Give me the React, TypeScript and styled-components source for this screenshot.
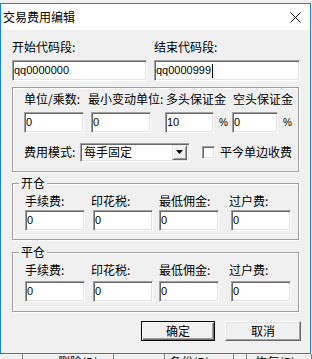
import React from 'react';
import styled, { createGlobalStyle } from 'styled-components';

const Global = createGlobalStyle`
  html, body { margin: 0; padding: 0; background: #f0f0f0; }
  body {
    font-family: "Noto Sans CJK SC", "Microsoft YaHei", sans-serif;
    font-size: 12px;
    color: #000;
  }
  * { box-sizing: border-box; }
`;

const Screen = styled.div`
  width: 312px;
  height: 359px;
  overflow: hidden;
  background: #f0f0f0;
  padding-top: 3px;
  display: flex;
  flex-direction: column;
`;

const Dialog = styled.div`
  width: 311px;
  height: 351px;
  flex: none;
  border: 1px solid #1a84d8;
  background: #f0f0f0;
  display: flex;
  flex-direction: column;
`;

const TitleBar = styled.div`
  height: 26px;
  background: #fff;
  display: flex;
  align-items: center;
  padding: 0 9px 0 2px;
  font-size: 12px;
  line-height: 14px;
`;

const TitleText = styled.span`
  flex: 1;
`;

const Content = styled.div`
  padding: 10px 9px 0 11px;
  display: flex;
  flex-direction: column;
`;

const CodeRow = styled.div`
  display: grid;
  grid-template-columns: 135px 146px;
  column-gap: 7px;
`;

const Field = styled.div<{ $gap?: number }>`
  display: flex;
  flex-direction: column;
  gap: ${p => p.$gap ?? 6}px;
`;

const Label = styled.div<{ $shift?: number }>`
  height: 14px;
  line-height: 14px;
  white-space: nowrap;
  margin-left: ${p => p.$shift ?? 0}px;
`;

const TextBox = styled.div<{ $w?: number }>`
  width: ${p => (p.$w ? `${p.$w}px` : '100%')};
  height: 21px;
  background: #fff;
  border: 1px solid;
  border-color: #a0a0a0 #fff #fff #a0a0a0;
  box-shadow: inset 1px 1px 0 #696969, inset -1px -1px 0 #e3e3e3;
  padding: 0 0 0 1px;
  display: flex;
  align-items: center;
  font-family: "Liberation Sans", Arial, sans-serif;
  font-size: 11px;
  line-height: 13px;
`;

const Caret = styled.span`
  display: inline-block;
  width: 1px;
  height: 14px;
  background: #000;
  margin-left: 1px;
`;

const Panel = styled.div`
  margin-top: 6px;
  width: 287px;
  border: 1px solid #a0a0a0;
  box-shadow: inset 1px 1px 0 #fff, 1px 1px 0 #fff;
  padding: 4px 0 9px 11px;
  display: flex;
  flex-direction: column;
`;

const ParamGrid = styled.div`
  display: grid;
  grid-template-columns: 67px 74px 67px 60px;
`;

const Suffix = styled.div`
  display: flex;
  align-items: center;
  gap: 5px;
  font-family: "Liberation Sans", Arial, sans-serif;
  font-size: 10px;
`;

const ModeRow = styled.div`
  margin-top: 9px;
  height: 20px;
  display: flex;
  align-items: center;
`;

const ModeLabel = styled.div`
  width: 56px;
  line-height: 14px;
`;

const Combo = styled.div`
  width: 110px;
  height: 19px;
  background: #fff;
  border: 1px solid;
  border-color: #a0a0a0 #fff #fff #a0a0a0;
  box-shadow: inset 1px 1px 0 #696969, inset -1px -1px 0 #e3e3e3;
  display: flex;
  align-items: center;
  padding: 1px 2px 1px 3px;
`;

const ComboText = styled.span`
  flex: 1;
  line-height: 14px;
`;

const ComboButton = styled.div`
  width: 15px;
  height: 15px;
  background: #f0f0f0;
  border: 1px solid;
  border-color: #e3e3e3 #696969 #696969 #e3e3e3;
  box-shadow: inset 1px 1px 0 #fff, inset -1px -1px 0 #a0a0a0;
  display: flex;
  align-items: center;
  justify-content: center;
`;

const CheckBox = styled.div`
  width: 13px;
  height: 13px;
  margin-left: 12px;
  background: #fff;
  border: 1px solid;
  border-color: #a0a0a0 #fff #fff #a0a0a0;
  box-shadow: inset 1px 1px 0 #696969, inset -1px -1px 0 #e3e3e3;
`;

const CheckLabel = styled.span`
  margin-left: 5px;
  line-height: 14px;
`;

const Group = styled.fieldset<{ $mt: number; $pb: number }>`
  margin: ${p => p.$mt}px 0 0 0;
  width: 287px;
  border: 1px solid #a0a0a0;
  box-shadow: inset 1px 1px 0 #fff, 1px 1px 0 #fff;
  padding: 0 0 ${p => p.$pb}px 12px;
  min-inline-size: 0;
`;

const Legend = styled.legend`
  padding: 0 2px;
  margin-left: -6px;
  line-height: 14px;
  font-size: 12px;
`;

const FeeGrid = styled.div`
  margin-top: 4px;
  display: grid;
  grid-template-columns: 68px 66px 72px 60px;
`;

const ButtonRow = styled.div`
  margin-top: 9px;
  display: flex;
  justify-content: flex-end;
  gap: 10px;
`;

const Button = styled.div<{ $w: number; $default?: boolean }>`
  width: ${p => p.$w}px;
  height: 20px;
  background: #f0f0f0;
  border: 1px solid;
  border-color: ${p => (p.$default ? '#000' : '#fff #696969 #696969 #fff')};
  box-shadow: ${p =>
    p.$default
      ? 'inset 1px 1px 0 #fff, inset -1px -1px 0 #696969, inset -2px -2px 0 #a0a0a0'
      : 'inset -1px -1px 0 #a0a0a0, inset 1px 1px 0 #e3e3e3'};
  display: flex;
  align-items: center;
  justify-content: center;
  line-height: 14px;
`;

const BackStrip = styled.div`
  height: 5px;
  flex: none;
  display: flex;
  overflow: hidden;
  align-items: flex-start;
`;

const BackButton = styled.div<{ $ml: number; $w: number; $pl: number }>`
  margin-left: ${p => p.$ml}px;
  width: ${p => p.$w}px;
  height: 20px;
  border-left: 1px solid #808080;
  border-right: 1px solid #808080;
  padding: 1px 0 0 ${p => p.$pl}px;
  line-height: 14px;
  white-space: nowrap;
`;

const CloseIcon = () => (
  <svg width="11" height="11" viewBox="0 0 11 11">
    <path d="M0.5 0.5 L10.5 10.5 M10.5 0.5 L0.5 10.5" stroke="#000" strokeWidth="1" fill="none" />
  </svg>
);

const Arrow = () => (
  <svg width="7" height="4" viewBox="0 0 7 4">
    <path d="M0 0 H7 L3.5 4 Z" fill="#000" />
  </svg>
);

const feeLabels = ['手续费:', '印花税:', '最低佣金:', '过户费:'];
const feeShifts = [0, -2, 0, -2];

const FeeRow = ({ gap }: { gap: number }) => (
  <FeeGrid>
    {feeLabels.map((l, i) => (
      <Field key={l} $gap={gap}>
        <Label $shift={feeShifts[i]}>{l}</Label>
        <TextBox $w={60}>0</TextBox>
      </Field>
    ))}
  </FeeGrid>
);

export default function App() {
  return (
    <>
      <Global />
      <Screen>
        <Dialog>
          <TitleBar>
            <TitleText>交易费用编辑</TitleText>
            <CloseIcon />
          </TitleBar>
          <Content>
            <CodeRow>
              <Field>
                <Label>开始代码段:</Label>
                <TextBox>qq0000000</TextBox>
              </Field>
              <Field>
                <Label>结束代码段:</Label>
                <TextBox>
                  qq0000999
                  <Caret />
                </TextBox>
              </Field>
            </CodeRow>

            <Panel>
              <ParamGrid>
                <Field>
                  <Label>单位/乘数:</Label>
                  <TextBox $w={60}>0</TextBox>
                </Field>
                <Field>
                  <Label $shift={-3}>最小变动单位:</Label>
                  <TextBox $w={60}>0</TextBox>
                </Field>
                <Field>
                  <Label $shift={1}>多头保证金</Label>
                  <Suffix>
                    <TextBox $w={49}>10</TextBox>%
                  </Suffix>
                </Field>
                <Field>
                  <Label $shift={1}>空头保证金</Label>
                  <Suffix>
                    <TextBox $w={47}>0</TextBox>%
                  </Suffix>
                </Field>
              </ParamGrid>
              <ModeRow>
                <ModeLabel>费用模式:</ModeLabel>
                <Combo>
                  <ComboText>每手固定</ComboText>
                  <ComboButton>
                    <Arrow />
                  </ComboButton>
                </Combo>
                <CheckBox />
                <CheckLabel>平今单边收费</CheckLabel>
              </ModeRow>
            </Panel>

            <Group $mt={4} $pb={8}>
              <Legend>开仓</Legend>
              <FeeRow gap={2} />
            </Group>

            <Group $mt={5} $pb={9}>
              <Legend>平仓</Legend>
              <FeeRow gap={4} />
            </Group>

            <ButtonRow>
              <Button $w={74} $default>确定</Button>
              <Button $w={76}>取消</Button>
            </ButtonRow>
          </Content>
        </Dialog>
        <BackStrip>
          <BackButton $ml={22} $w={95} $pl={35}>删除(D)</BackButton>
          <BackButton $ml={50} $w={74} $pl={5}>备份(B)</BackButton>
          <BackButton $ml={12} $w={70} $pl={9}>恢复(R)</BackButton>
        </BackStrip>
      </Screen>
    </>
  );
}
